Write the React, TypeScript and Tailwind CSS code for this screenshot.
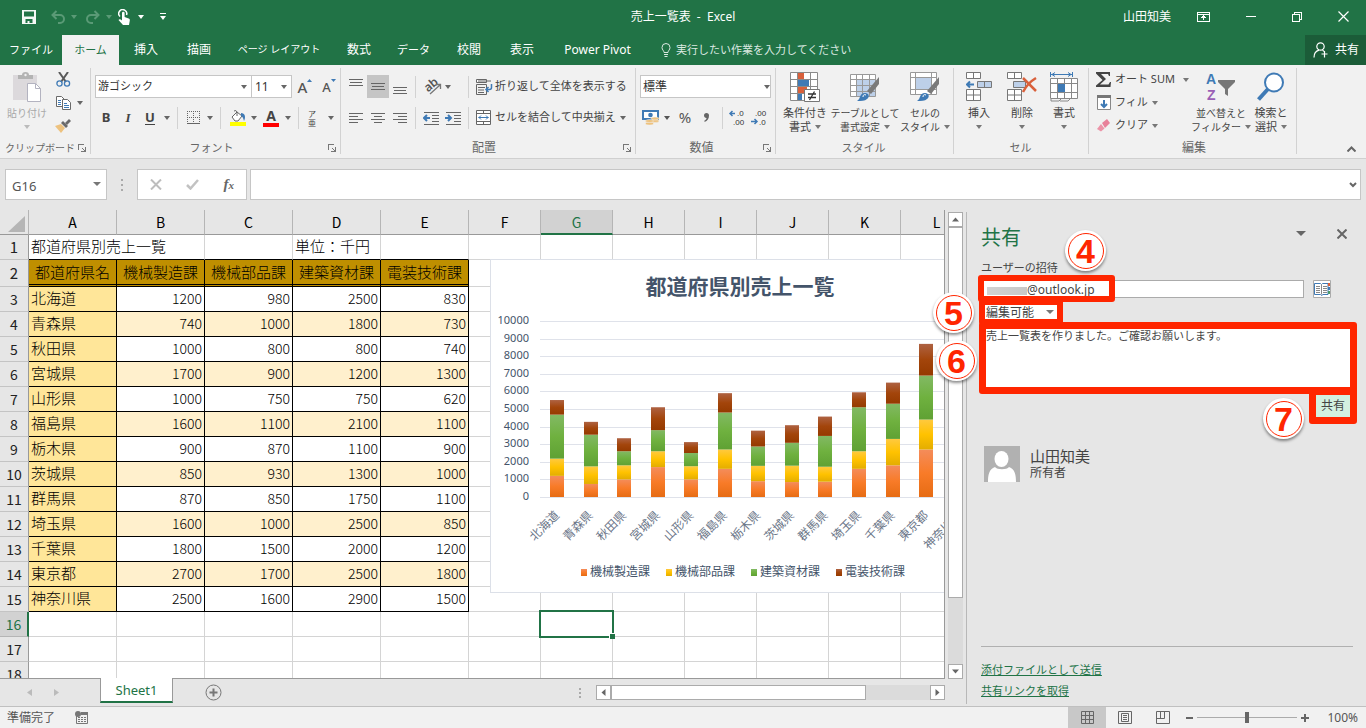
import { ReactNode } from 'react'

interface IRow {
  name: string
  values: number[]
}

const departments = ['機械製造課', '機械部品課', '建築資材課', '電装技術課']

const rows: IRow[] = [
  { name: '北海道', values: [1200, 980, 2500, 830] },
  { name: '青森県', values: [740, 1000, 1800, 730] },
  { name: '秋田県', values: [1000, 800, 800, 740] },
  { name: '宮城県', values: [1700, 900, 1200, 1300] },
  { name: '山形県', values: [1000, 750, 750, 620] },
  { name: '福島県', values: [1600, 1100, 2100, 1100] },
  { name: '栃木県', values: [900, 870, 1100, 900] },
  { name: '茨城県', values: [850, 930, 1300, 1000] },
  { name: '群馬県', values: [870, 850, 1750, 1100] },
  { name: '埼玉県', values: [1600, 1000, 2500, 850] },
  { name: '千葉県', values: [1800, 1500, 2000, 1200] },
  { name: '東京都', values: [2700, 1700, 2500, 1800] },
  { name: '神奈川県', values: [2500, 1600, 2900, 1500] },
]

const columns = ['A', 'B', 'C', 'D', 'E', 'F', 'G', 'H', 'I', 'J', 'K', 'L']
const blankColumns = columns.slice(5)

/* ---------- small parts ---------- */

interface CaretProps {
  size?: string
  className?: string
}

const Caret = ({ size = 'h-[4px] w-[6px]', className = '' }: CaretProps) => (
  <svg
    className={`shrink-0 ${size} ${className}`}
    viewBox="0 0 6 4"
    preserveAspectRatio="none"
    fill="currentColor"
  >
    <path d="M0 0h6L3 4z" />
  </svg>
)

const Launcher = () => (
  <svg
    className="h-2 w-2"
    viewBox="0 0 8 8"
    fill="none"
    stroke="#777"
    shapeRendering="crispEdges"
  >
    <path d="M.5 6V.5H6" />
    <path d="M7.5 3v4.5H3M4 4l3 3" />
  </svg>
)

const Divider = ({ className = '' }: { className?: string }) => (
  <span className={`h-[22px] w-px shrink-0 bg-[#d2d2d2] ${className}`} />
)

interface ToolProps {
  label: string
  className?: string
  children: ReactNode
}

const Tool = ({ label, className = 'w-[22px]', children }: ToolProps) => (
  <button
    aria-label={label}
    className={`flex h-[23px] shrink-0 items-center justify-center ${className}`}
  >
    {children}
  </button>
)

interface GroupProps {
  title: string
  className: string
  titleClass?: string
  launcher?: boolean
  children: ReactNode
}

const Group = ({
  title,
  className,
  titleClass = 'text-xs',
  launcher,
  children,
}: GroupProps) => (
  <section
    className={`flex shrink-0 flex-col border-r border-[#d2d2d2] ${className}`}
  >
    <div className="h-[74px]">{children}</div>
    <div className="flex h-3 items-center pr-1 text-[#666]">
      <span className={`flex-1 text-center leading-4 ${titleClass}`}>
        {title}
      </span>
      {launcher && (
        <button aria-label={`${title}の設定`}>
          <Launcher />
        </button>
      )}
    </div>
  </section>
)

interface BigToolProps {
  lines: string[]
  className: string
  textClass?: string
  icon: ReactNode
}

const BigTool = ({
  lines,
  className,
  textClass = 'text-[11px]',
  icon,
}: BigToolProps) => (
  <button
    className={`flex shrink-0 flex-col items-center pt-1 whitespace-nowrap ${className}`}
  >
    {icon}
    <span className={`mt-1 leading-[14px] ${textClass}`}>{lines[0]}</span>
    <span
      className={`flex h-[14px] items-center gap-1 leading-[14px] ${textClass}`}
    >
      {lines[1]}
      <Caret className="text-[#777]" />
    </span>
  </button>
)

const Lines = ({ d, className = '' }: { d: string; className?: string }) => (
  <svg
    className={`h-4 w-[14px] ${className}`}
    viewBox="0 0 14 16"
    stroke="#666"
    fill="none"
    shapeRendering="crispEdges"
  >
    <path d={d} />
  </svg>
)

const Indent = ({ out }: { out?: boolean }) => (
  <svg
    className="h-[14px] w-4"
    viewBox="0 0 16 14"
    fill="none"
    stroke="#666"
    shapeRendering="crispEdges"
  >
    <path d="M1 1.5h15M9 4.5h7M9 7.5h7M9 10.5h7M1 13.5h15" />
    <path
      d={out ? 'M1 7h6M4 4L1 7l3 3' : 'M0 7h6M3 4l3 3-3 3'}
      stroke="#3f7ab5"
      strokeWidth="2"
      shapeRendering="auto"
    />
  </svg>
)

/* ---------- title bar and tabs ---------- */

const TitleBar = () => (
  <header className="flex h-[35px] items-center bg-[#217346] pb-[2px] text-white">
    <div className="flex flex-1 items-center">
      <button aria-label="上書き保存" className="pl-[22px]">
        <svg className="h-[14px] w-[14px]" viewBox="0 0 14 14">
          <path
            d="M0 0h14v14H0zM2 1.5v5h10v-5zM3.5 9v4h2v-2h2v2h3V9z"
            fill="#f4f8f5"
            fillRule="evenodd"
          />
        </svg>
      </button>
      <button
        aria-label="元に戻す"
        className="ml-[15px] flex items-center gap-[6px] text-[#5a9a76]"
      >
        <svg
          className="h-[14px] w-[14px]"
          viewBox="0 0 14 14"
          fill="none"
          stroke="currentColor"
          strokeWidth="2"
        >
          <path d="M5.5 1L1.500 5l4 4M1.500 5H9a3.500 3.500 0 010 8H7" />
        </svg>
        <Caret />
      </button>
      <button
        aria-label="やり直し"
        className="ml-[9px] flex items-center gap-[6px] text-[#5a9a76]"
      >
        <svg
          className="h-[14px] w-[14px]"
          viewBox="0 0 14 14"
          fill="none"
          stroke="currentColor"
          strokeWidth="2"
        >
          <path d="M8.500 1l4 4-4 4M12.500 5H5a3.500 3.500 0 000 8h2" />
        </svg>
        <Caret />
      </button>
      <button
        aria-label="タッチ/マウス モード"
        className="ml-[6px] flex items-center gap-2"
      >
        <svg className="h-4 w-3" viewBox="0 0 12 16">
          <path
            d="M2 7.500A4 4 0 1 1 8.500 6"
            fill="none"
            stroke="#fff"
            strokeWidth="1.500"
          />
          <path
            d="M4 4a1.300 1.300 0 012.600 0v4l4 1.500c1 .4 1.400 1 1.200 2L11 16H5L.5 11c.8-1 1.800-1 3.500.500z"
            fill="#fff"
          />
        </svg>
        <Caret />
      </button>
      <button
        aria-label="クイック アクセス ツール バーのユーザー設定"
        className="ml-4 flex flex-col items-center gap-[2px]"
      >
        <span className="h-px w-[6px] bg-white" />
        <Caret />
      </button>
    </div>
    <h1 className="text-xs">売上一覧表&nbsp; -&nbsp; Excel</h1>
    <div className="flex flex-1 items-center justify-end">
      <span className="mr-[26px] text-xs">山田知美</span>
      <button aria-label="リボンの表示オプション" className="mr-9">
        <svg
          className="h-3 w-[13px]"
          viewBox="0 0 13 12"
          fill="none"
          stroke="#fff"
          shapeRendering="crispEdges"
        >
          <path d="M.5 1.500h12v9H.5zM.5 3.500h12M6.500 9V5M4.500 7l2-2 2 2" />
        </svg>
      </button>
      <button aria-label="最小化" className="mr-9 h-px w-[10px] bg-white" />
      <button aria-label="元に戻す (縮小)" className="mr-9">
        <svg
          className="h-[10px] w-[10px]"
          viewBox="0 0 10 10"
          fill="none"
          stroke="#fff"
          shapeRendering="crispEdges"
        >
          <path d="M.5 2.500h7v7h-7zM2.500 2V.5h7v7H8" />
        </svg>
      </button>
      <button aria-label="閉じる" className="mr-[17px]">
        <svg
          className="h-[11px] w-[11px]"
          viewBox="0 0 11 11"
          stroke="#fff"
          strokeWidth="1.200"
        >
          <path d="M.5.5l10 10M10.500.5l-10 10" />
        </svg>
      </button>
    </div>
  </header>
)

const TabBar = () => (
  <nav className="flex h-[30px] items-center bg-[#217346] text-xs whitespace-nowrap text-white">
    <button className="w-[62px] text-[11px]">ファイル</button>
    <button className="h-full w-[57px] bg-[#f1f1f1] text-[11px] text-[#217346]">
      ホーム
    </button>
    <button className="w-[54px]">挿入</button>
    <button className="w-[52px]">描画</button>
    <button className="w-[108px] text-[10px]">ページ レイアウト</button>
    <button className="w-[52px]">数式</button>
    <button className="w-[57px] text-[11px]">データ</button>
    <button className="w-[54px]">校閲</button>
    <button className="w-[52px]">表示</button>
    <button className="w-[99px]">Power Pivot</button>
    <button className="ml-[14px] flex items-center gap-[5px] text-[11px] text-[#dbe9e1]">
      <svg
        className="h-[14px] w-[10px]"
        viewBox="0 0 10 14"
        fill="none"
        stroke="currentColor"
      >
        <path d="M3 9.500C3 7.500 1 7 1 4.500a4 4 0 018 0C9 7 7 7.500 7 9.500zM3 11.500h4M3.500 13.500h3" />
      </svg>
      実行したい作業を入力してください
    </button>
    <button className="ml-auto flex h-full w-[61px] items-center gap-[7px] bg-[#1b5c38] pl-2">
      <svg
        className="h-4 w-[15px]"
        viewBox="0 0 15 16"
        fill="none"
        stroke="#fff"
        strokeWidth="1.200"
      >
        <circle cx="7.500" cy="4.500" r="3.700" />
        <path d="M1 15.500c0-4 2-6.500 5-7.300M9.500 8.200l1.500 1M11.500 9v6.500M8.500 12h6" />
      </svg>
      共有
    </button>
  </nav>
)

/* ---------- ribbon ---------- */

const ClipboardGroup = () => (
  <Group
    title="クリップボード"
    titleClass="text-[10px]"
    className="w-[91px] pl-[2px]"
    launcher
  >
    <div className="flex">
      <button className="flex w-[50px] flex-col items-center pt-1 text-[#a8a8a8]">
        <svg className="h-[30px] w-[28px]" viewBox="0 0 28 30">
          <path d="M0 3h24v25H0z" fill="#dcd9dc" />
          <path
            d="M5 7V3h4a3.500 3 0 017 0h4v4z"
            fill="#b3b3b3"
          />
          <circle cx="12.500" cy="3" r="1.200" fill="#f1f1f1" />
          <path d="M14.500 11.500h8l5 5v13h-13z" fill="#fff" stroke="#b3b3c0" />
          <path d="M22.500 11.500v5h5" fill="none" stroke="#b3b3c0" />
        </svg>
        <span className="mt-1 text-[10px] leading-[14px]">貼り付け</span>
        <Caret className="mt-[5px] text-[#bbb]" />
      </button>
      <div className="flex flex-col">
        <Tool label="切り取り">
          <svg className="h-[15px] w-[15px]" viewBox="0 0 15 15" fill="none">
            <path d="M3 0l7 10M12 0L5 10" stroke="#5a5a5a" strokeWidth="2" />
            <circle cx="3.500" cy="11.500" r="2.600" stroke="#3f7ab5" strokeWidth="1.300" />
            <circle cx="11" cy="11.500" r="2.600" stroke="#3f7ab5" strokeWidth="1.300" />
          </svg>
        </Tool>
        <Tool label="コピー" className="w-[34px] gap-[6px]">
          <svg
            className="h-[14px] w-[15px]"
            viewBox="0 0 15 14"
            fill="#fff"
            stroke="#6a6a6a"
          >
            <path d="M.5.5h5l2.500 2.500v7.500H.5z" />
            <path d="M2 4.500h3M2 6.500h3M2 8.500h3" stroke="#3f7ab5" />
            <path d="M6.500 3.500h5l3 3v7h-8z" />
            <path d="M8 7.500h3M8 9.500h5M8 11.500h5" stroke="#3f7ab5" />
          </svg>
          <Caret className="text-[#666]" />
        </Tool>
        <Tool label="書式のコピー/貼り付け">
          <svg className="h-[14px] w-4" viewBox="0 0 16 14">
            <path d="M0 7l6-2 4 4-4 5z" fill="#edc27f" />
            <path d="M6 4l2-2 5 5-2 2z" fill="#6a6a6a" />
            <path d="M10 4l4-4 2 2-4 4z" fill="#6a6a6a" />
          </svg>
        </Tool>
      </div>
    </div>
  </Group>
)

const FontGroup = () => (
  <Group title="フォント" titleClass="text-[11px]" className="w-[250px] pl-1" launcher>
    <div className="flex pt-[7px]">
      <label className="relative flex">
        <select
          aria-label="フォント"
          className="h-[23px] w-[157px] appearance-none border border-[#c6c6c6] bg-white pl-[2px] text-[11px] text-[#333]"
        >
          <option>游ゴシック</option>
        </select>
        <Caret className="pointer-events-none absolute top-[10px] right-[5px] text-[#666]" />
      </label>
      <label className="relative flex">
        <select
          aria-label="フォント サイズ"
          className="h-[23px] w-10 appearance-none border border-l-0 border-[#c6c6c6] bg-white pl-[3px] text-xs text-[#333]"
        >
          <option>11</option>
        </select>
        <Caret className="pointer-events-none absolute top-[10px] right-[5px] text-[#666]" />
      </label>
      <Tool label="フォント サイズの拡大" className="w-[26px]">
        <span className="flex items-start text-[15px] leading-[20px] font-medium text-[#555]">
          A
          <svg className="h-[6px] w-[5px]" viewBox="0 0 5 6" fill="#3f7ab5">
            <path d="M0 5h5L2.500 2z" />
          </svg>
        </span>
      </Tool>
      <Tool label="フォント サイズの縮小">
        <span className="flex items-start text-[13px] leading-[20px] font-medium text-[#555]">
          A
          <svg className="h-[6px] w-[5px]" viewBox="0 0 5 6" fill="#3f7ab5">
            <path d="M0 2h5L2.500 5z" />
          </svg>
        </span>
      </Tool>
    </div>
    <div className="mt-2 flex items-center text-[13px] font-bold text-[#444]">
      <Tool label="太字">B</Tool>
      <Tool label="斜体">
        <i className="font-['Liberation_Serif',serif]">I</i>
      </Tool>
      <Tool label="下線">
        <span className="border-b border-[#444] leading-[14px]">U</span>
      </Tool>
      <Tool label="下線の種類" className="w-[12px]">
        <Caret className="text-[#666]" />
      </Tool>
      <Divider className="mx-1" />
      <Tool label="罫線" className="w-[22px]">
        <svg
          className="h-[13px] w-[13px]"
          viewBox="0 0 13 13"
          stroke="#666"
          fill="none"
          shapeRendering="crispEdges"
        >
          <path
            d="M0 .5h13M0 6.500h13M.5 0v12M6.500 0v12M12.500 0v12"
            strokeDasharray="1 1"
          />
          <path d="M0 12.500h13" />
        </svg>
      </Tool>
      <Tool label="罫線の種類" className="w-3">
        <Caret className="text-[#666]" />
      </Tool>
      <Divider className="mx-1" />
      <Tool label="塗りつぶしの色" className="w-[25px]">
        <svg className="h-4 w-4" viewBox="0 0 16 16">
          <path d="M0 12h16v4H0z" fill="#ffff00" />
          <path
            d="M2 7l5-5 5 4-4 5H5z"
            fill="#fff"
            stroke="#666"
          />
          <path d="M7 6V2a2 2 0 00-3-1" fill="none" stroke="#666" />
          <path d="M11 3c4 0 5 4 3 8-1-3-1-4-3-5z" fill="#3f7ab5" />
        </svg>
      </Tool>
      <Tool label="塗りつぶしの種類" className="w-2">
        <Caret className="text-[#666]" />
      </Tool>
      <Tool label="フォントの色" className="w-[26px]">
        <span className="flex h-[18px] w-4 items-end justify-center border-b-4 border-[#ff0000] text-[14px] leading-[14px]">
          A
        </span>
      </Tool>
      <Tool label="フォントの色の種類" className="w-2">
        <Caret className="text-[#666]" />
      </Tool>
      <Divider className="ml-[6px]" />
      <Tool label="ふりがなの表示" className="w-[26px]">
        <span className="flex flex-col items-center font-['Noto_Sans_CJK_JP',sans-serif] text-[8px] leading-[9px] font-normal">
          <span>ア</span>
          <span>亜</span>
        </span>
      </Tool>
      <Tool label="ふりがなの設定" className="w-3">
        <Caret className="text-[#666]" />
      </Tool>
    </div>
  </Group>
)

const AlignGroup = () => (
  <Group title="配置" className="w-[295px] pl-1" launcher>
    <div className="flex items-center pt-[7px] whitespace-nowrap">
      <Tool label="上揃え">
        <Lines d="M0 0.500h14M1 3.500h12M0 6.500h14" />
      </Tool>
      <Tool label="上下中央揃え" className="w-[22px] bg-[#c5c5c5]">
        <Lines d="M0 4.500h14M1 7.500h12M0 10.500h14" />
      </Tool>
      <Tool label="下揃え">
        <Lines d="M0 8.500h14M1 11.500h12M0 14.500h14" />
      </Tool>
      <Divider className="mx-1" />
      <Tool label="方向" className="w-9 gap-[4px]">
        <svg className="h-4 w-4 overflow-visible" viewBox="0 0 16 16">
          <text
            x="1"
            y="12"
            fontSize="12"
            fontWeight="600"
            fill="#555"
            transform="rotate(-40 4 10)"
          >
            ab
          </text>
          <path
            d="M5 15L15 6M11 5.500h4.500V10"
            stroke="#777"
            strokeWidth="1.300"
            fill="none"
          />
        </svg>
        <Caret className="text-[#666]" />
      </Tool>
      <Divider className="mr-[7px] ml-3" />
      <button className="flex items-center gap-[2px] text-[11px]">
        <svg
          className="h-4 w-[17px]"
          viewBox="0 0 17 16"
          fill="none"
          stroke="#666"
        >
          <path d="M.5.5h10v3H.5z" fill="#fff" />
          <path d="M2 2h13M.5 5.500h10v10H.5zM2 8.500h7M2 11h6M2 13.500h6" />
          <path
            d="M15.500 5v3.500a2 2 0 01-2 2H10M12.500 8l-2.500 2.500 2.500 2.500"
            stroke="#3f7ab5"
            strokeWidth="1.500"
          />
        </svg>
        折り返して全体を表示する
      </button>
    </div>
    <div className="mt-2 flex items-center whitespace-nowrap">
      <Tool label="左揃え">
        <Lines d="M0 3.500h14M0 6.500h9M0 9.500h14M0 12.500h9" />
      </Tool>
      <Tool label="中央揃え">
        <Lines d="M0 3.500h14M3 6.500h8M0 9.500h14M3 12.500h8" />
      </Tool>
      <Tool label="右揃え">
        <Lines d="M0 3.500h14M5 6.500h9M0 9.500h14M5 12.500h9" />
      </Tool>
      <Divider className="mx-1" />
      <Tool label="インデントを減らす">
        <Indent out />
      </Tool>
      <Tool label="インデントを増やす">
        <Indent />
      </Tool>
      <Divider className="mr-[7px] ml-1" />
      <button className="flex items-center gap-1 text-[11px]">
        <svg
          className="h-[15px] w-[15px]"
          viewBox="0 0 15 15"
          fill="#fff"
          stroke="#666"
        >
          <path d="M.5.5h14v14H.5zM.5 3.500h14M.5 11.500h14M7.500.5v3M7.500 11.500v3" />
          <path
            d="M2.500 7.500h10M5 5.500l-2 2 2 2M10 5.500l2 2-2 2"
            stroke="#3f7ab5"
            fill="none"
          />
        </svg>
        セルを結合して中央揃え
        <Caret className="text-[#666]" />
      </button>
    </div>
  </Group>
)

const NumberGroup = () => (
  <Group title="数値" className="w-[140px] pl-1" launcher>
    <div className="pt-[7px]">
      <label className="relative flex">
        <select
          aria-label="数値の書式"
          className="h-[23px] w-[131px] appearance-none border border-[#c6c6c6] bg-white pl-[2px] text-xs text-[#333]"
        >
          <option>標準</option>
        </select>
        <Caret className="pointer-events-none absolute top-[10px] right-[5px] text-[#666]" />
      </label>
    </div>
    <div className="mt-2 flex items-center text-[#555]">
      <Tool label="通貨表示形式" className="w-8 gap-[5px]">
        <svg className="h-[15px] w-[17px]" viewBox="0 0 17 15">
          <path d="M1 1h15v8H1z" fill="#fff" stroke="#3f7ab5" strokeWidth="2" />
          <circle cx="8.500" cy="5" r="2.300" fill="#3f7ab5" />
          <g fill="#edc27f" stroke="#f1f1f1" strokeWidth=".5">
            <ellipse cx="13" cy="11" rx="4" ry="1.500" />
            <ellipse cx="13" cy="8.500" rx="4" ry="1.500" />
            <ellipse cx="7.500" cy="13.500" rx="4" ry="1.500" />
            <ellipse cx="7.500" cy="11" rx="4" ry="1.500" />
          </g>
        </svg>
        <Caret />
      </Tool>
      <Tool label="パーセント スタイル" className="w-[26px] text-[15px]">
        %
      </Tool>
      <Tool label="桁区切りスタイル" className="w-4">
        <svg className="h-[9px] w-[5px]" viewBox="0 0 5 9" fill="#666">
          <path d="M5 2.500C5 5.500 3.500 8 .500 9V7.500C2 6.800 2.500 6 2.500 5 1 5 0 4 0 2.500A2.500 2.500 0 015 2.500z" />
        </svg>
      </Tool>
      <Divider className="mr-[3px] ml-2" />
      <Tool label="小数点以下の表示桁数を増やす">
        <svg
          className="h-4 w-4 overflow-visible font-['Liberation_Sans',sans-serif]"
          viewBox="0 0 16 16"
          fontSize="8"
          fill="#333"
        >
          <text x="8" y="6">.0</text>
          <text x="4" y="15">.00</text>
          <path d="M6 3.500H1M3.500 1L1 3.500 3.500 6" stroke="#3f7ab5" strokeWidth="1.500" fill="none" />
        </svg>
      </Tool>
      <Tool label="小数点以下の表示桁数を減らす">
        <svg
          className="h-4 w-4 overflow-visible font-['Liberation_Sans',sans-serif]"
          viewBox="0 0 16 16"
          fontSize="8"
          fill="#333"
        >
          <text x="4" y="6">.00</text>
          <text x="8" y="15">.0</text>
          <path d="M0 11.500h6M3.500 9L6 11.500 3.500 14" stroke="#3f7ab5" strokeWidth="1.500" fill="none" />
        </svg>
      </Tool>
    </div>
  </Group>
)

const Brush = () => (
  <>
    <path d="M29 5v7l-8 10-4-3z" fill="#7a7a7a" />
    <path d="M7 29c4-2 2-8 8-8 4 0 5 4 2 6-2 2-6 2-10 2z" fill="#3f7ab5" />
    <path d="M13 25c0-2 1-3 3-2" fill="none" stroke="#fff" />
  </>
)

const StylesGroup = () => (
  <Group title="スタイル" titleClass="text-[11px]" className="w-[178px] pl-[2px]">
    <div className="flex">
      <BigTool
        lines={['条件付き', '書式']}
        className="w-[54px]"
        icon={
          <svg className="h-[30px] w-[30px]" viewBox="0 0 30 30">
            <path
              d="M.5.500h27v28H.5zM.5 7.500h27M.5 14.500h27M.5 21.500h27M7.500.5v28M20.500.5v28"
              fill="#fff"
              stroke="#8a8a8a"
            />
            <path d="M8 1h6v6H8zM8 15h9v6H8z" fill="#d9603b" />
            <path d="M8 8h11v6H8zM8 22h4v6H8z" fill="#3f7ab5" />
            <path d="M14.500 17.500h15v12h-15z" fill="#fff" stroke="#777" />
            <path d="M18 22h8M18 25.500h8M24.500 19.500L19.500 28" stroke="#333" strokeWidth="1.300" />
          </svg>
        }
      />
      <BigTool
        lines={['テーブルとして', '書式設定']}
        className="w-[66px]"
        textClass="text-[10px]"
        icon={
          <svg className="h-[30px] w-[30px]" viewBox="0 0 30 30">
            <path d="M.5 2.500h25v22H.5z" fill="#fff" />
            <path d="M7 8h18v16H7z" fill="#bdd0e9" />
            <path
              d="M.5 2.500h25v22H.5zM.5 7.500h25M.5 13.500h25M.5 19.500h25M6.500 2.500v22M12.500 2.500v22M19.500 2.500v22"
              fill="none"
              stroke="#999"
            />
            <Brush />
          </svg>
        }
      />
      <BigTool
        lines={['セルの', 'スタイル']}
        className="w-[54px]"
        textClass="text-[10px]"
        icon={
          <svg className="h-[30px] w-[30px]" viewBox="0 0 30 30">
            <path
              d="M.5.500h26v22H.5zM.5 5.500h26M.5 17.500h26M5.500.5v22M21.500.5v22"
              fill="#fff"
              stroke="#999"
            />
            <path d="M6 6h15v11H6z" fill="#bdd0e9" />
            <Brush />
          </svg>
        }
      />
    </div>
  </Group>
)

const CellsGroup = () => (
  <Group title="セル" titleClass="text-[11px]" className="w-[135px] pl-[3px]">
    <div className="flex">
      <BigTool
        lines={['挿入', '']}
        className="w-11"
        icon={
          <svg className="h-[30px] w-[26px]" viewBox="0 0 26 30" stroke="#777" fill="#fff">
            <path d="M.5.500h14v6H.5zM7.500.5v6M.5 17.500h14v11H.5zM7.500 17.500v11M.5 23h14" />
            <path d="M11.500 9.500h14v6h-14zM18.500 9.500v6" fill="#bdd0e9" />
            <path d="M8 12.500H1M4 9.500l-3 3 3 3" stroke="#3f7ab5" strokeWidth="2" fill="none" />
          </svg>
        }
      />
      <BigTool
        lines={['削除', '']}
        className="w-[42px]"
        icon={
          <svg className="h-[30px] w-[30px]" viewBox="0 0 30 30" stroke="#777" fill="#fff">
            <path d="M.5.500h14v6H.5zM7.500.5v6M.5 17.500h14v11H.5zM7.500 17.500v11M.5 23h14" />
            <path d="M6.500 9.500h12v6h-12z" fill="#bdd0e9" />
            <path d="M16 6c4 4 8 8 13 13M29 6c-5 3-10 8-13 14" stroke="#d9603b" strokeWidth="2.500" fill="none" />
          </svg>
        }
      />
      <BigTool
        lines={['書式', '']}
        className="w-[42px]"
        icon={
          <svg className="h-[30px] w-7" viewBox="0 0 28 30" stroke="#888" fill="#fff">
            <path d="M.5 6.500h27v20H.5zM.5 11.500h27M.5 20.500h27M7.500 6.500v20M14.500 6.500v20M21.500 6.500v20" />
            <path d="M8 12h7v8H8z" fill="#3f7ab5" stroke="none" />
            <path d="M.5 0v5M22.500 0v5M1 2.500h21M5 .5l-3 2 3 2M18 .5l3 2-3 2" stroke="#3f7ab5" fill="none" />
            <path d="M1 27v2h8l2-2M10 29h8l2-2" fill="none" />
          </svg>
        }
      />
    </div>
  </Group>
)

const EditGroup = () => (
  <Group title="編集" className="w-[208px] pl-[7px]">
    <div className="flex">
      <div className="flex w-[101px] flex-col text-[11px] whitespace-nowrap">
        <button className="flex h-[23px] items-center gap-1">
          <svg className="h-[15px] w-[15px]" viewBox="0 0 15 15" fill="#444">
            <path d="M0 0h14v4h-1l-1-2H5l5 5-6 5.500h8.500L14 10h1l-.5 5H0v-1.500L6.500 8 0 1.500z" />
          </svg>
          <span>オート SUM</span>
          <Caret className="ml-1 text-[#777]" />
        </button>
        <button className="flex h-[23px] items-center gap-1">
          <svg className="h-[15px] w-[15px]" viewBox="0 0 15 15" fill="#fff" stroke="#888">
            <path d="M1.500.5h13v14h-13z" />
            <path d="M1 0h14v3H1z" fill="#777" stroke="none" />
            <path d="M8 5v7M5 9l3 3 3-3" stroke="#3f7ab5" strokeWidth="2" fill="none" />
          </svg>
          フィル
          <Caret className="text-[#777]" />
        </button>
        <button className="flex h-[23px] items-center gap-1">
          <svg className="h-[13px] w-[15px]" viewBox="0 0 15 13">
            <path d="M6 4l5-4 3 4-5 5z" fill="#e8819a" />
            <path d="M5 5l3.500 4.500-3.500 3L1 10z" fill="#ec94a8" />
          </svg>
          クリア
          <Caret className="text-[#777]" />
        </button>
      </div>
      <BigTool
        lines={['並べ替えと', 'フィルター']}
        className="w-[50px]"
        textClass="text-[10px]"
        icon={
          <svg
            className="h-[30px] w-[30px] overflow-visible font-['Liberation_Sans',sans-serif]"
            viewBox="0 0 30 30"
            fontSize="14"
            fontWeight="bold"
          >
            <text x="0" y="12" fill="#3f7ab5">A</text>
            <text x="1" y="28" fill="#9a5fb5">Z</text>
            <path d="M12 8h17v2l-7 7v7l-3-2v-5l-7-7z" fill="#777" />
          </svg>
        }
      />
      <BigTool
        lines={['検索と', '選択']}
        className="w-[50px]"
        icon={
          <svg className="h-[30px] w-7" viewBox="0 0 28 30">
            <path d="M1.500 27.500L11 17" stroke="#3f7ab5" strokeWidth="4" />
            <circle cx="17" cy="10.500" r="9" fill="#fff" stroke="#3f7ab5" strokeWidth="2" />
          </svg>
        }
      />
    </div>
  </Group>
)

const Ribbon = () => (
  <div className="flex h-[94px] border-b border-[#d0d0d0] bg-[#f1f1f1] pt-[3px] pb-1 text-[#444]">
    <ClipboardGroup />
    <FontGroup />
    <AlignGroup />
    <NumberGroup />
    <StylesGroup />
    <CellsGroup />
    <EditGroup />
    <button
      aria-label="リボンを折りたたむ"
      className="mt-auto mr-[10px] mb-[2px] ml-auto"
    >
      <svg
        className="h-[6px] w-[9px]"
        viewBox="0 0 9 6"
        fill="none"
        stroke="#666"
        strokeWidth="2"
      >
        <path d="M.5 5.500l4-4 4 4" />
      </svg>
    </button>
  </div>
)

const FormulaBar = () => (
  <div className="flex h-[51px] items-center pr-[5px] pl-[5px]">
    <label className="relative flex">
      <input
        aria-label="名前ボックス"
        defaultValue="G16"
        className="h-[31px] w-[102px] border border-[#c6c6c6] bg-white pt-[3px] pl-[6px] text-[13px] text-[#555]"
      />
      <Caret
        size="h-[4px] w-[8px]"
        className="absolute top-[13px] right-[6px] text-[#777]"
      />
    </label>
    <div className="ml-[14px] flex w-4 flex-col gap-[3px] text-[#aaa]">
      <span className="h-[2px] w-[2px] bg-current" />
      <span className="h-[2px] w-[2px] bg-current" />
      <span className="h-[2px] w-[2px] bg-current" />
    </div>
    <div className="flex h-[31px] w-[110px] items-center justify-around border border-[#c6c6c6] bg-white">
      <button aria-label="キャンセル">
        <svg className="h-[11px] w-3" viewBox="0 0 12 11" stroke="#bdbdbd" strokeWidth="2">
          <path d="M1 .5l10 10M11 .5l-10 10" />
        </svg>
      </button>
      <button aria-label="入力">
        <svg className="h-[11px] w-[13px]" viewBox="0 0 13 11" stroke="#c2c2c2" strokeWidth="2.500" fill="none">
          <path d="M1 6l3.500 3.500L12 1" />
        </svg>
      </button>
      <button
        aria-label="関数の挿入"
        className="font-['Liberation_Serif',serif] text-[15px] leading-4 font-bold text-[#666] italic"
      >
        f<span className="text-[11px]">x</span>
      </button>
    </div>
    <div className="relative ml-[3px] flex flex-1">
      <input
        aria-label="数式バー"
        className="h-[31px] w-full border border-[#c6c6c6] bg-white px-2 text-[13px]"
      />
      <svg
        className="absolute top-[13px] right-1 h-[6px] w-2"
        viewBox="0 0 8 6"
        fill="none"
        stroke="#666"
        strokeWidth="2"
      >
        <path d="M1 1l3 3 3-3" />
      </svg>
    </div>
  </div>
)

/* ---------- worksheet ---------- */

const RowHead = ({ row }: { row: number }) => (
  <th
    className={`border-r border-b p-0 text-center font-normal ${
      row === 16
        ? 'border-r-2 border-r-[#217346] border-b-[#b5b5b5] bg-[#d2d2d2] text-[#217346]'
        : 'border-r-[#999] border-b-[#c4c4c4] bg-[#e6e6e6] text-[#222]'
    }`}
  >
    {row}
  </th>
)

const BlankCells = ({ names }: { names: string[] }) => (
  <>
    {names.map((name) => (
      <td key={name} className="border-r border-b border-[#d4d4d4]" />
    ))}
  </>
)

const Sheet = () => (
  <table className="w-[973px] table-fixed border-separate border-spacing-0 font-['Noto_Sans_CJK_JP','Noto_Sans',sans-serif] text-sm leading-5 font-light text-black">
    <colgroup>
      <col className="w-[29px]" />
      {columns.map((name, i) => (
        <col key={name} className={i < 5 ? 'w-[88px]' : 'w-[72px]'} />
      ))}
    </colgroup>
    <thead>
      <tr className="h-[25px] bg-[#e6e6e6]">
        <th className="border-r border-b border-r-[#b5b5b5] border-b-[#999] p-0">
          <svg className="mt-1 ml-2 h-4 w-[17px]" viewBox="0 0 17 16" fill="#b5b5b5">
            <path d="M17 0v16H0z" />
          </svg>
        </th>
        {columns.map((name) => (
          <th
            key={name}
            className={`border-r p-0 font-normal ${
              name === 'G'
                ? 'border-b-2 border-r-[#b5b5b5] border-b-[#217346] bg-[#d2d2d2] text-[#217346]'
                : 'border-b border-r-[#b5b5b5] border-b-[#999]'
            }`}
          >
            {name}
          </th>
        ))}
      </tr>
    </thead>
    <tbody>
      <tr className="h-[25px] text-[15px]">
        <RowHead row={1} />
        <td
          colSpan={2}
          className="border-r border-b border-r-[#d4d4d4] border-b-black px-[2px] pt-0 pb-[2px]"
        >
          都道府県別売上一覧
        </td>
        <td className="border-r border-b border-r-[#d4d4d4] border-b-black" />
        <td className="border-r border-b border-r-[#d4d4d4] border-b-black px-[2px] pt-0 pb-[2px]">
          単位：千円
        </td>
        <td className="border-r border-b border-r-[#d4d4d4] border-b-black" />
        <BlankCells names={blankColumns} />
      </tr>
      <tr className="h-[27px] text-[15px]">
        <RowHead row={2} />
        {['都道府県名', ...departments].map((name) => (
          <td
            key={name}
            className="border-r border-b-3 border-r-black border-b-black bg-[#bf8f00] p-0 text-center [border-bottom-style:double]"
          >
            {name}
          </td>
        ))}
        <BlankCells names={blankColumns} />
      </tr>
      {rows.map((row, i) => (
        <tr key={row.name} className="h-[25px]">
          <RowHead row={i + 3} />
          <td className="border-r border-b border-black bg-[#ffe699] px-[2px] pt-0 pb-[2px] text-[15px]">
            {row.name}
          </td>
          {row.values.map((value, j) => (
            <td
              key={departments[j]}
              className={`border-r border-b border-black px-[2px] pt-0 pb-[2px] text-right ${
                i % 2 === 1 ? 'bg-[#fff0cd]' : ''
              }`}
            >
              {value}
            </td>
          ))}
          <BlankCells names={blankColumns} />
        </tr>
      ))}
      {[16, 17, 18].map((row) => (
        <tr key={row} className="h-[25px]">
          <RowHead row={row} />
          <BlankCells names={columns} />
        </tr>
      ))}
    </tbody>
  </table>
)

const gradients = [
  ['#f48c5b', '#f87b28', '#e66c14'],
  ['#ffc93f', '#ffc200', '#e3ad00'],
  ['#82b964', '#6fb13f', '#5fa134'],
  ['#ae6242', '#a3450b', '#953a00'],
]

const chartBottom = 238
const chartScale = 176 / 10000

const Chart = () => (
  <svg
    className="h-[334px] w-[520px]"
    viewBox="0 0 520 334"
    fill="#44546a"
    fontSize="12"
  >
    <defs>
      {gradients.map((stops, i) => (
        <linearGradient key={i} id={`series${i}`} x1="0" y1="0" x2="0" y2="1">
          <stop offset="0" stopColor={stops[0]} />
          <stop offset=".5" stopColor={stops[1]} />
          <stop offset="1" stopColor={stops[2]} />
        </linearGradient>
      ))}
    </defs>
    <rect x=".5" y=".5" width="519" height="333" fill="#fff" stroke="#dce0e8" />
    <text x="250" y="35" textAnchor="middle" fontSize="21" fontWeight="bold">
      都道府県別売上一覧
    </text>
    {Array.from({ length: 11 }, (_, i) => {
      const y = Math.round(chartBottom - i * 1000 * chartScale)
      return (
        <g key={i}>
          <path d={`M50 ${y + 0.5}h470`} stroke="#dfe2ea" />
          <text x="39" y={y + 3} textAnchor="end" fontSize="11">
            {i * 1000}
          </text>
        </g>
      )
    })}
    {rows.map((row, i) => {
      const center = 67 + i * 33.55
      let total = 0
      return (
        <g key={row.name}>
          {row.values.map((value, j) => {
            total += value
            return (
              <rect
                key={j}
                x={Math.round(center - 7)}
                y={chartBottom - total * chartScale}
                width="14"
                height={value * chartScale}
                fill={`url(#series${j})`}
              />
            )
          })}
          <text
            textAnchor="end"
            fill="#6b7688"
            transform={`translate(${center + 3} 257) rotate(-45)`}
          >
            {row.name}
          </text>
        </g>
      )
    })}
    {departments.map((name, i) => (
      <g key={name}>
        <rect
          x={91 + i * 85}
          y="310"
          width="6"
          height="7"
          fill={`url(#series${i})`}
        />
        <text x={100 + i * 85} y="317">
          {name}
        </text>
      </g>
    ))}
  </svg>
)

const ScrollButton = ({ label, d }: { label: string; d: string }) => (
  <button
    aria-label={label}
    className="flex h-[15px] w-[15px] shrink-0 items-center justify-center border border-[#ababab] bg-white"
  >
    <svg className="h-[7px] w-[7px]" viewBox="0 0 7 7" fill="#666">
      <path d={d} />
    </svg>
  </button>
)

const Workbook = () => (
  <div className="flex min-w-0 flex-1 flex-col">
    <div className="flex min-h-0 flex-1">
      <div className="relative min-w-0 flex-1 overflow-hidden border-r border-b border-[#999] bg-white">
        <Sheet />
        <div className="absolute top-[49px] left-[490px]">
          <Chart />
        </div>
        <div className="absolute top-[400px] left-[539px] h-[28px] w-[75px] border-2 border-[#217346]">
          <span className="absolute -right-[3px] -bottom-[3px] h-[6px] w-[6px] border-t border-l border-white bg-[#217346]" />
        </div>
      </div>
      <div className="mt-[2px] ml-[3px] flex w-[15px] flex-col bg-[#dbdbdb]">
        <ScrollButton label="上へスクロール" d="M0 5.500h7L3.500 1.500z" />
        <div className="h-[371px] border border-[#ababab] bg-white" />
        <div className="mt-auto">
          <ScrollButton label="下へスクロール" d="M0 1.500h7L3.500 5.500z" />
        </div>
      </div>
      <div className="w-[3px]" />
    </div>
    <div className="flex h-[27px] items-center pr-[21px]">
      <div className="flex w-[100px] gap-[22px] pl-[27px] text-[#bbb]">
        <svg className="h-[7px] w-[5px]" viewBox="0 0 5 7" fill="currentColor">
          <path d="M5 0v7L0 3.500z" />
        </svg>
        <svg className="h-[7px] w-[5px]" viewBox="0 0 5 7" fill="currentColor">
          <path d="M0 0v7l5-3.500z" />
        </svg>
      </div>
      <button className="z-10 -mt-px h-[25px] w-[73px] self-start border-x border-b-2 border-x-[#999] border-b-[#217346] bg-white pt-[2px] text-[13px] text-[#217346]">
        Sheet1
      </button>
      <button aria-label="新しいシート" className="ml-8">
        <svg
          className="h-[17px] w-[17px]"
          viewBox="0 0 17 17"
          fill="none"
          stroke="#777"
        >
          <circle cx="8.500" cy="8.500" r="7.500" />
          <path d="M4.500 8.500h8M8.500 4.500v8" strokeWidth="2" />
        </svg>
      </button>
      <div className="mr-[15px] ml-auto flex flex-col gap-[2px]">
        <span className="h-[2px] w-[2px] bg-[#aaa]" />
        <span className="h-[2px] w-[2px] bg-[#aaa]" />
        <span className="h-[2px] w-[2px] bg-[#aaa]" />
      </div>
      <div className="flex w-[349px] bg-[#dbdbdb]">
        <ScrollButton label="左へスクロール" d="M5.500 0v7L1.500 3.500z" />
        <div className="h-[15px] w-[255px] border border-[#ababab] bg-white" />
        <div className="ml-auto">
          <ScrollButton label="右へスクロール" d="M1.500 0v7l4-3.500z" />
        </div>
      </div>
    </div>
  </div>
)

/* ---------- share pane ---------- */

const Frame = ({ className }: { className: string }) => (
  <span
    className={`pointer-events-none absolute z-10 rounded-[3px] border-[#ff2600] ${className}`}
  />
)

const Step = ({ n, className }: { n: number; className: string }) => (
  <span
    className={`absolute z-20 flex h-[41px] w-[41px] items-center justify-center rounded-full bg-white shadow-[0_2px_3px_rgba(0,0,0,0.45)] ${className}`}
  >
    <span className="flex h-[36px] w-[36px] items-center justify-center rounded-full border border-[#ff2600] font-['Liberation_Sans',sans-serif] text-[34px] leading-none font-bold text-[#ff2600]">
      {n}
    </span>
  </span>
)

const SharePane = () => (
  <aside className="relative mt-[2px] mb-[2px] flex w-[400px] shrink-0 flex-col border-l border-[#b8b8b8] pr-[13px] pb-[3px] pl-[14px] text-[#444]">
    <div className="flex h-10 items-start pt-3">
      <h2 className="flex-1 text-xl leading-7 text-[#217346]">共有</h2>
      <button aria-label="作業ウィンドウ オプション" className="mr-[31px] flex h-[19px] items-center">
        <Caret size="h-[5px] w-[10px]" className="text-[#666]" />
      </button>
      <button aria-label="閉じる" className="mr-[6px] flex h-[19px] items-center">
        <svg className="h-[10px] w-[10px]" viewBox="0 0 10 10" stroke="#666" strokeWidth="2">
          <path d="M.5.5l9 9M9.500.5l-9 9" />
        </svg>
      </button>
    </div>
    <label htmlFor="invite" className="mt-2 text-[11px] leading-4">
      ユーザーの招待
    </label>
    <div className="relative mt-1 flex">
      <input
        id="invite"
        defaultValue="@outlook.jp"
        className="h-[18px] w-[323px] border border-[#ababab] bg-white pl-[45px] text-xs"
      />
      <span className="absolute top-[7px] left-[6px] h-[8px] w-[40px] bg-linear-to-r from-[#d2d2d2] to-[#c8c8c8]" />
      <button aria-label="アドレス帳から連絡先を検索" className="ml-[9px]">
        <svg className="h-[18px] w-[18px]" viewBox="0 0 18 18" fill="#fff">
          <path d="M.5.5h17v17H.5z" stroke="#ababab" />
          <path d="M1.500 3.500h6l1 1 1-1h5.500v11H10l-1.500 1-1-1h-6z" stroke="#3f7ab5" />
          <path d="M8.500 4.500v10M3 6.500h4M3 8.500h4M3 10.500h4M3 12.500h4M10 6.500h4M10 8.500h4M10 10.500h4M10 12.500h4" stroke="#888" />
          <path d="M15 3h2v3h-2z" fill="#d9603b" />
          <path d="M15 7h2v3h-2z" fill="#3f7ab5" />
          <path d="M15 11h2v3h-2z" fill="#4a9a6a" />
        </svg>
      </button>
      <Frame className="-top-[5px] -left-[3px] h-[27px] w-[137px] border-[6px]" />
    </div>
    <div className="relative mt-[5px] flex">
      <select
        aria-label="アクセス許可"
        className="h-[20px] w-[76px] appearance-none bg-white pl-[5px] text-xs leading-4"
      >
        <option>編集可能</option>
      </select>
      <Caret
        size="h-[4px] w-[8px]"
        className="pointer-events-none absolute top-[7px] left-[65px] text-[#777]"
      />
      <Frame className="-top-[4px] -left-[2px] h-[26px] w-[84px] border-[6px]" />
    </div>
    <div className="relative mt-px flex">
      <textarea
        aria-label="メッセージ"
        defaultValue="売上一覧表を作りました。ご確認お願いします。"
        className="h-[67px] w-full resize-none bg-white pt-1 pl-[5px] text-[11px] leading-4"
      />
      <Frame className="-top-[2px] -right-[4px] -bottom-[3px] -left-[2px] border-[7px]" />
    </div>
    <div className="relative mt-[3px] flex justify-end pr-[3px]">
      <button className="h-[23px] w-[34px] bg-[#d3f0e0] text-xs">共有</button>
      <Frame className="-top-[6px] -right-[4px] h-[36px] w-[48px] border-[7px]" />
    </div>
    <div className="mt-[29px] flex gap-[10px] pl-[3px]">
      <svg className="h-9 w-9" viewBox="0 0 36 36">
        <path d="M0 0h36v36H0z" fill="#b1b1b1" />
        <ellipse cx="17.500" cy="13" rx="7" ry="8" fill="#fff" />
        <path d="M4 36c0-7 1-13 7-15 2 3 12 3 14 0 6 2 7 8 7 15z" fill="#fff" />
      </svg>
      <div>
        <p className="text-[15px] leading-[20px]">山田知美</p>
        <p className="text-xs leading-[14px]">所有者</p>
      </div>
    </div>
    <div className="mt-auto flex flex-col items-start border-t border-[#b0b0b0] pt-3 text-[11px] leading-[21px] text-[#217346] underline">
      <a href="#attachment">添付ファイルとして送信</a>
      <a href="#link">共有リンクを取得</a>
    </div>
    <Step n={4} className="top-[18px] left-[98px]" />
    <Step n={5} className="top-[80px] -left-[34px]" />
    <Step n={6} className="top-[128px] -left-[31px]" />
    <Step n={7} className="top-[186px] left-[296px]" />
  </aside>
)

/* ---------- status bar ---------- */

const StatusBar = () => (
  <footer className="flex h-[22px] items-center border-t border-[#c0c0c0] bg-[#f1f1f1] pl-[7px] text-xs text-[#555]">
    <span>準備完了</span>
    <button aria-label="マクロの記録" className="ml-5">
      <svg className="h-[13px] w-[13px]" viewBox="0 0 13 13" fill="none" stroke="#777">
        <path d="M1.500 5v7.500h11V1.500H6" />
        <path d="M6 1h7v3H6z" fill="#777" stroke="none" />
        <circle cx="3" cy="3" r="3" fill="#777" stroke="none" />
        <path d="M3 6.500h8M3 8.500h8M3 10.500h8" strokeDasharray="2 1" />
      </svg>
    </button>
    <div className="ml-auto flex h-full items-center">
      <button
        aria-label="標準"
        className="flex h-full w-[38px] items-center justify-center bg-[#c8c8c8]"
      >
        <svg className="h-[13px] w-[13px]" viewBox="0 0 13 13" fill="none" stroke="#666">
          <path d="M.5.5h12v12H.5zM.5 4.500h12M.5 8.500h12M4.500.5v12M8.500.5v12" />
        </svg>
      </button>
      <button aria-label="ページ レイアウト" className="flex w-[38px] justify-center">
        <svg className="h-[13px] w-[14px]" viewBox="0 0 14 13" fill="none" stroke="#666">
          <path d="M.5.5h13v12H.5zM3.500 2.500h7v8h-7zM5 4.500h4M5 6.500h4M5 8.500h4" />
        </svg>
      </button>
      <button aria-label="改ページ プレビュー" className="flex w-[38px] justify-center">
        <svg className="h-[13px] w-[14px]" viewBox="0 0 14 13" fill="none" stroke="#666">
          <path d="M.5.5h13v12H.5zM.5 7.500h8v-7M4.500.5v7" />
        </svg>
      </button>
      <button aria-label="縮小" className="ml-1 h-[2px] w-[7px] bg-[#666]" />
      <label className="relative ml-1 flex h-3 w-[100px] items-center">
        <span className="h-px w-full bg-[#ababab]" />
        <span className="absolute left-12 h-[11px] w-1 bg-[#666]" />
        <input
          type="range"
          aria-label="ズーム"
          className="absolute inset-0 w-full opacity-0"
        />
      </label>
      <button aria-label="拡大" className="ml-1">
        <svg className="h-2 w-2" viewBox="0 0 8 8" stroke="#666" strokeWidth="2">
          <path d="M0 4h8M4 0v8" />
        </svg>
      </button>
      <span className="w-[57px] pr-2 text-right">100%</span>
    </div>
  </footer>
)

const App = () => {
  return (
    <div className="flex h-screen flex-col overflow-hidden bg-[#e6e6e6] font-['Noto_Sans','Noto_Sans_CJK_JP',sans-serif]">
      <TitleBar />
      <TabBar />
      <Ribbon />
      <FormulaBar />
      <main className="flex min-h-0 flex-1">
        <Workbook />
        <SharePane />
      </main>
      <StatusBar />
    </div>
  )
}

export default App
